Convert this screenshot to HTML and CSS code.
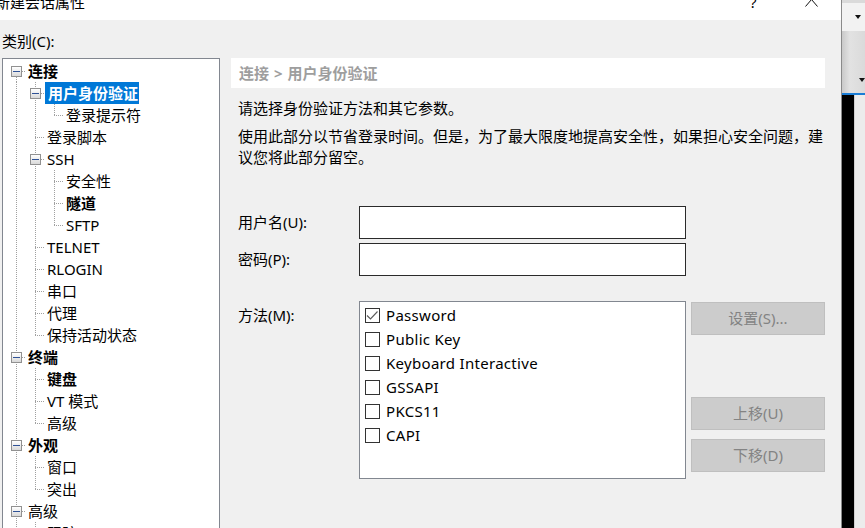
FILE: index.html
```html
<!DOCTYPE html>
<html lang="zh-CN">
<head>
<meta charset="utf-8">
<title>新建会话属性</title>
<link rel="stylesheet" href="styles.css">
</head>
<body>
<div class="screen">
  <div class="dialog">
    <div class="titlebar">
      <span class="title">新建会话属性</span>
      <span class="help">?</span>
      <svg class="close" width="13" height="8" viewBox="0 0 13 8"><polyline points="0.5,7.5 6.5,0.5 12.5,7.5" fill="none" stroke="#111" stroke-width="1"/></svg>
    </div>
    <div class="body">
      <div class="cat-label">类别(C):</div>
      <div class="main">
        <div class="tree">
          <div class="row"><span class="cell first"><span class="exp"></span></span><span class="lbl b">连接</span></div>
          <div class="row"><span class="cell pipe"></span><span class="cell tee"><span class="exp"></span></span><span class="lbl b sel">用户身份验证</span></div>
          <div class="row"><span class="cell pipe"></span><span class="cell pipe"></span><span class="cell ell"></span><span class="lbl">登录提示符</span></div>
          <div class="row"><span class="cell pipe"></span><span class="cell tee"></span><span class="lbl">登录脚本</span></div>
          <div class="row"><span class="cell pipe"></span><span class="cell tee"><span class="exp"></span></span><span class="lbl">SSH</span></div>
          <div class="row"><span class="cell pipe"></span><span class="cell pipe"></span><span class="cell tee"></span><span class="lbl">安全性</span></div>
          <div class="row"><span class="cell pipe"></span><span class="cell pipe"></span><span class="cell tee"></span><span class="lbl b">隧道</span></div>
          <div class="row"><span class="cell pipe"></span><span class="cell pipe"></span><span class="cell ell"></span><span class="lbl">SFTP</span></div>
          <div class="row"><span class="cell pipe"></span><span class="cell tee"></span><span class="lbl">TELNET</span></div>
          <div class="row"><span class="cell pipe"></span><span class="cell tee"></span><span class="lbl">RLOGIN</span></div>
          <div class="row"><span class="cell pipe"></span><span class="cell tee"></span><span class="lbl">串口</span></div>
          <div class="row"><span class="cell pipe"></span><span class="cell tee"></span><span class="lbl">代理</span></div>
          <div class="row"><span class="cell pipe"></span><span class="cell ell"></span><span class="lbl">保持活动状态</span></div>
          <div class="row"><span class="cell tee"><span class="exp"></span></span><span class="lbl b">终端</span></div>
          <div class="row"><span class="cell pipe"></span><span class="cell tee"></span><span class="lbl b">键盘</span></div>
          <div class="row"><span class="cell pipe"></span><span class="cell tee"></span><span class="lbl">VT 模式</span></div>
          <div class="row"><span class="cell pipe"></span><span class="cell ell"></span><span class="lbl">高级</span></div>
          <div class="row"><span class="cell tee"><span class="exp"></span></span><span class="lbl b">外观</span></div>
          <div class="row"><span class="cell pipe"></span><span class="cell tee"></span><span class="lbl">窗口</span></div>
          <div class="row"><span class="cell pipe"></span><span class="cell ell"></span><span class="lbl">突出</span></div>
          <div class="row"><span class="cell tee"><span class="exp"></span></span><span class="lbl">高级</span></div>
          <div class="row"><span class="cell pipe"></span><span class="cell tee"></span><span class="lbl">跟踪</span></div>
        </div>
        <div class="panel">
          <div class="crumb">连接 &gt; 用户身份验证</div>
          <p class="desc first-desc">请选择身份验证方法和其它参数。</p>
          <p class="desc">使用此部分以节省登录时间。但是，为了最大限度地提高安全性，如果担心安全问题，建议您将此部分留空。</p>
          <div class="form">
            <label class="flabel">用户名(U):</label><div class="input"></div>
            <label class="flabel">密码(P):</label><div class="input"></div>
          </div>
          <div class="methods">
            <div class="mlabel">方法(M):</div>
            <div class="list">
              <div class="item"><span class="chk"><svg width="13" height="13" viewBox="0 0 13 13"><polyline points="1,6.5 4.5,10 11.5,2.5" fill="none" stroke="#5a5a5a" stroke-width="1.1"/></svg></span><span>Password</span></div>
              <div class="item"><span class="chk"></span><span>Public Key</span></div>
              <div class="item"><span class="chk"></span><span>Keyboard Interactive</span></div>
              <div class="item"><span class="chk"></span><span>GSSAPI</span></div>
              <div class="item"><span class="chk"></span><span>PKCS11</span></div>
              <div class="item"><span class="chk"></span><span>CAPI</span></div>
            </div>
            <div class="btns">
              <div class="btn btn-set">设置(S)...</div>
              <div class="btn btn-up">上移(U)</div>
              <div class="btn btn-down">下移(D)</div>
            </div>
          </div>
        </div>
      </div>
    </div>
  </div>
  <div class="side">
    <div class="s-top"></div>
    <div class="s-bar1"><span class="tri"></span></div>
    <div class="s-bar2"><span class="tri"></span></div>
    <div class="s-blue"></div>
    <div class="s-rest"><div class="s-black"></div><div class="s-light"></div></div>
  </div>
</div>
</body>
</html>
```

FILE: styles.css
```css
html, body {
  margin: 0;
  padding: 0;
}
body {
  width: 865px;
  height: 528px;
  overflow: hidden;
  font-family: "Noto Sans", "Noto Sans CJK SC", sans-serif;
  font-size: 15px;
  color: #000;
}
.screen {
  display: flex;
  width: 865px;
  height: 528px;
  overflow: hidden;
}
.dialog {
  width: 842px;
  flex: none;
  box-sizing: border-box;
  border-right: 1px solid #8a8a8a;
  display: flex;
  flex-direction: column;
  overflow: hidden;
}
.titlebar {
  height: 20px;
  flex: none;
  background: #fff;
  display: flex;
  align-items: flex-start;
  overflow: hidden;
  padding-right: 23px;
}
.title {
  line-height: 20px;
  margin-top: -8px;
  margin-left: -5px;
  flex: 1;
  white-space: nowrap;
}
.help {
  line-height: 20px;
  margin-top: -8px;
  width: 55px;
}
.close {
  display: block;
  margin-top: -1px;
}
.body {
  flex: 1;
  background: #f0f0f0;
  padding: 11px 0 0 2px;
  display: flex;
  flex-direction: column;
  min-height: 0;
}
.cat-label {
  line-height: 20px;
  height: 20px;
  margin-bottom: 7px;
}
.main {
  display: flex;
  gap: 11px;
  align-items: flex-start;
}
.tree {
  width: 218px;
  flex: none;
  box-sizing: border-box;
  border: 1px solid #828790;
  background: #fff;
  padding: 1px 0 0 4px;
}
.row {
  display: flex;
  height: 22px;
}
.cell {
  width: 19px;
  height: 22px;
  flex: none;
  display: flex;
  justify-content: center;
  align-items: flex-start;
  background-repeat: no-repeat;
}
.pipe {
  background-image: repeating-linear-gradient(to bottom, #a0a0a0 0 1px, transparent 1px 2px);
  background-position: 9px 0;
  background-size: 1px 100%;
}
.tee {
  background-image: repeating-linear-gradient(to bottom, #a0a0a0 0 1px, transparent 1px 2px),
                    repeating-linear-gradient(to right, #a0a0a0 0 1px, transparent 1px 2px);
  background-position: 9px 0, 9px 11px;
  background-size: 1px 100%, 10px 1px;
}
.ell {
  background-image: repeating-linear-gradient(to bottom, #a0a0a0 0 1px, transparent 1px 2px),
                    repeating-linear-gradient(to right, #a0a0a0 0 1px, transparent 1px 2px);
  background-position: 9px 0, 9px 11px;
  background-size: 1px 12px, 10px 1px;
}
.first {
  background-image: repeating-linear-gradient(to bottom, #a0a0a0 0 1px, transparent 1px 2px),
                    repeating-linear-gradient(to right, #a0a0a0 0 1px, transparent 1px 2px);
  background-position: 9px 11px, 9px 11px;
  background-size: 1px 11px, 10px 1px;
}
.exp {
  width: 11px;
  height: 11px;
  margin-top: 6px;
  box-sizing: border-box;
  border: 1px solid #919191;
  background: linear-gradient(#ffffff, #d9d9d9);
  display: flex;
  align-items: center;
  justify-content: center;
}
.exp::before {
  content: "";
  width: 7px;
  height: 1px;
  background: #2f5296;
}
.lbl {
  line-height: 22px;
  padding: 0 2px;
  white-space: nowrap;
}
.lbl.b {
  font-weight: bold;
}
.lbl.sel {
  background: #0078d7;
  color: #fff;
  padding: 0 1px 0 3px;
}
.panel {
  width: 594px;
  flex: none;
}
.crumb {
  height: 30px;
  line-height: 30px;
  background: #fff;
  padding-left: 8px;
  color: #9e9e9e;
  font-weight: bold;
  word-spacing: 1px;
}
.desc {
  margin: 7px 0 0 7px;
  width: 596px;
  line-height: 21px;
}
.first-desc {
  margin-top: 10px;
}
.form {
  display: grid;
  grid-template-columns: 121px 327px;
  grid-auto-rows: 33px;
  row-gap: 4px;
  margin: 38px 0 0 7px;
}
.flabel {
  align-self: center;
  line-height: 21px;
  padding-bottom: 1px;
}
.input {
  box-sizing: border-box;
  border: 1px solid #2a2a2a;
  background: #fff;
}
.methods {
  display: flex;
  margin: 25px 0 0 7px;
  align-items: flex-start;
}
.mlabel {
  width: 121px;
  flex: none;
  padding-top: 4px;
  line-height: 21px;
}
.list {
  width: 327px;
  height: 178px;
  flex: none;
  box-sizing: border-box;
  border: 1px solid #828790;
  background: #fff;
  padding: 1px 0 0 5px;
}
.item {
  display: flex;
  align-items: center;
  gap: 6px;
  height: 24px;
  line-height: 24px;
  white-space: nowrap;
  letter-spacing: 0.3px;
}
.chk {
  width: 15px;
  height: 15px;
  box-sizing: border-box;
  border: 1px solid #333;
  background: #fff;
  flex: none;
  display: flex;
  align-items: center;
  justify-content: center;
}
.chk svg {
  display: block;
}
.btns {
  margin-left: 5px;
  width: 134px;
  display: flex;
  flex-direction: column;
}
.btn {
  height: 33px;
  box-sizing: border-box;
  border: 1px solid #bfbfbf;
  background: #cccccc;
  color: #838383;
  text-align: center;
  line-height: 30px;
}
.btn-set {
  margin-top: 1px;
}
.btn-up {
  margin-top: 62px;
}
.btn-down {
  margin-top: 9px;
}
.side {
  flex: 1;
  display: flex;
  flex-direction: column;
  background: #e8e8e8;
}
.s-top {
  height: 3px;
  background: #dadada;
}
.s-bar1 {
  height: 28px;
  background: #f2f2f2;
  display: flex;
  align-items: center;
  padding-left: 13px;
}
.s-bar2 {
  height: 62px;
  background: linear-gradient(to right, #c9c9c9, #e2e2e2 35%, #dadada);
  display: flex;
  align-items: flex-end;
  padding-left: 17px;
  padding-bottom: 11px;
  box-sizing: border-box;
}
.tri {
  width: 0;
  height: 0;
  border-left: 3.5px solid transparent;
  border-right: 3.5px solid transparent;
  border-top: 4px solid #111;
}
.s-blue {
  height: 2px;
  background: #1a7dd6;
}
.s-rest {
  flex: 1;
  display: flex;
}
.s-black {
  width: 12px;
  background: #000;
}
.s-light {
  flex: 1;
  background: #ececec;
  border-left: 1px solid #d0d0d0;
}
```
